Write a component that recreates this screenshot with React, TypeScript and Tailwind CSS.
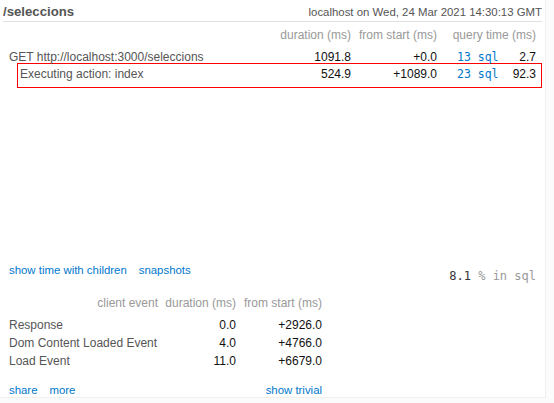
const rows = [
  { name: "GET http://localhost:3000/seleccions", dur: "1091.8", start: "+0.0", sql: "13 sql", qt: "2.7", child: false },
  { name: "Executing action: index", dur: "524.9", start: "+1089.0", sql: "23 sql", qt: "92.3", child: true },
];

const clientEvents = [
  { name: "Response", dur: "0.0", start: "+2926.0" },
  { name: "Dom Content Loaded Event", dur: "4.0", start: "+4766.0" },
  { name: "Load Event", dur: "11.0", start: "+6679.0" },
];

function Cells({ r }: { r: (typeof rows)[number] }) {
  return (
    <>
      <div className="w-[80px] text-right text-[#111]">{r.dur}</div>
      <div className="w-[86px] text-right text-[#111]">{r.start}</div>
      <div className="w-[60px] pl-[20px] whitespace-nowrap text-[#0077cc] font-['DejaVu_Sans_Mono',monospace] text-[11.5px]">
        {r.sql}
      </div>
      <div className="w-[39px] text-right text-[#111]">{r.qt}</div>
    </>
  );
}

export default function App() {
  return (
    <div className="w-[554px] h-[403px] bg-[#fbfbfb] font-['Liberation_Sans',Arial,sans-serif] text-[12px] leading-[18px]">
      <div className="w-[546px] h-[398px] pt-[3px] bg-white border-r border-b border-[#f0f0f0] flex flex-col">
        <div className="ml-[3px] w-[539px] h-[28px] flex items-center justify-between border-b border-[#e0e0e0]">
          <span className="text-[13.2px] font-bold text-[#555]">/seleccions</span>
          <span className="text-[11.4px] text-[#555]">localhost on Wed, 24 Mar 2021 14:30:13 GMT</span>
        </div>

        <div className="mt-[4px] flex text-[#999]">
          <div className="w-[271px]" />
          <div className="w-[80px] text-right">duration (ms)</div>
          <div className="w-[86px] text-right">from start (ms)</div>
          <div className="w-[99px] text-right">query time (ms)</div>
        </div>

        <div className="mt-[4px]">
          {rows.map((r, i) =>
            r.child ? (
              <div
                key={i}
                className="-mt-[3px] ml-[17px] w-[525px] pt-[1px] pb-[4px] border border-[#ff0000] flex"
              >
                <div className="w-[253px] pl-[2px] text-[#555]">{r.name}</div>
                <Cells r={r} />
              </div>
            ) : (
              <div key={i} className="flex">
                <div className="w-[271px] pl-[9px] text-[#555]">{r.name}</div>
                <Cells r={r} />
              </div>
            )
          )}
        </div>

        <div className="mt-[173px] flex justify-between items-start pl-[9px] w-[536px]">
          <div className="flex gap-[12px] text-[11.4px] text-[#0077cc]">
            <a href="#">show time with children</a>
            <a href="#">snapshots</a>
          </div>
          <div className="mt-[6px] font-['DejaVu_Sans_Mono',monospace] text-[12px]">
            <span className="text-[#333]">8.1</span>
            <span className="text-[#999]"> % in sql</span>
          </div>
        </div>

        <div className="mt-[9px] pl-[9px]">
          <div className="flex text-[#999]">
            <div className="w-[149px] text-right">client event</div>
            <div className="w-[78px] text-right">duration (ms)</div>
            <div className="w-[86px] text-right">from start (ms)</div>
          </div>
          <div className="mt-[4px]">
            {clientEvents.map((e) => (
              <div key={e.name} className="flex">
                <div className="w-[149px] whitespace-nowrap text-[#555]">{e.name}</div>
                <div className="w-[78px] text-right text-[#111]">{e.dur}</div>
                <div className="w-[86px] text-right text-[#111]">{e.start}</div>
              </div>
            ))}
          </div>
          <div className="mt-[11px] w-[313px] flex justify-between text-[11.4px] text-[#0077cc]">
            <div className="flex gap-[12px]">
              <a href="#">share</a>
              <a href="#">more</a>
            </div>
            <a href="#">show trivial</a>
          </div>
        </div>
      </div>
    </div>
  );
}
